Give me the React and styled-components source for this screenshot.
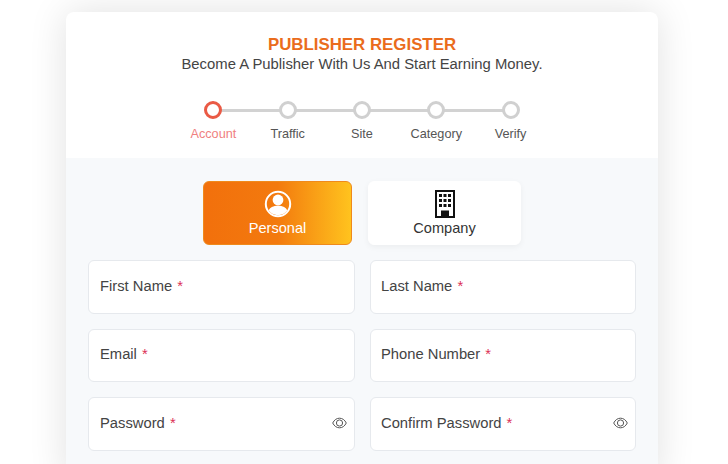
import React from 'react';
import styled, { createGlobalStyle } from 'styled-components';

const GlobalStyle = createGlobalStyle`
  html, body {
    margin: 0;
    height: 100%;
    overflow: hidden;
    background: #ffffff;
    font-family: "Liberation Sans", Arial, sans-serif;
  }
  * { box-sizing: border-box; }
`;

const Page = styled.div`
  width: 728px;
  height: 464px;
  overflow: hidden;
  padding-top: 12px;
  background: #ffffff;
`;

const Card = styled.div`
  width: 592px;
  margin-left: 66px;
  background: #ffffff;
  border-radius: 8px 8px 0 0;
  box-shadow: 0 0 38px rgba(0, 0, 0, 0.12);
`;

const Header = styled.div`
  height: 146px;
  padding-top: 23px;
  text-align: center;
`;

const Title = styled.h1`
  margin: 0;
  font-size: 16.85px;
  line-height: 20px;
  font-weight: 700;
  color: #ea6c1c;
`;

const Subtitle = styled.p`
  margin: 0;
  font-size: 14.85px;
  line-height: 18px;
  color: #444444;
`;

const Stepper = styled.div`
  display: grid;
  grid-template-columns: repeat(5, 74.3px);
  justify-content: center;
  margin-top: 28px;
`;

const Step = styled.div`
  position: relative;
  display: flex;
  flex-direction: column;
  align-items: center;
  gap: 8px;

  &:not(:last-child)::after {
    content: '';
    position: absolute;
    top: 8px;
    left: 50%;
    width: 100%;
    height: 3px;
    background: #d2d2d2;
  }
`;

const Dot = styled.span`
  position: relative;
  z-index: 1;
  width: 18px;
  height: 18px;
  border-radius: 50%;
  background: #ffffff;
  border: 3px solid ${p => (p.$active ? '#ea5a45' : '#d0d0d0')};
`;

const StepLabel = styled.span`
  font-size: 12.7px;
  line-height: 14px;
  color: ${p => (p.$active ? '#f08080' : '#555555')};
`;

const Form = styled.div`
  background: #f7f9fb;
  padding: 23px 22px 30px;
`;

const TypeRow = styled.div`
  display: flex;
  justify-content: center;
  gap: 16px;
  margin-bottom: 15px;
`;

const TypeButton = styled.button`
  width: ${p => (p.$active ? '149px' : '153px')};
  height: 64px;
  display: flex;
  flex-direction: column;
  align-items: center;
  padding: 8px 0 0;
  gap: 2px;
  border-radius: 6px;
  font-family: inherit;
  font-size: 14.6px;
  line-height: 17px;
  border: 1px solid ${p => (p.$active ? '#ef8a1c' : '#ffffff')};
  color: ${p => (p.$active ? '#ffffff' : '#333333')};
  background: ${p => (p.$active
    ? 'linear-gradient(90deg, #f2700c 0%, #f37a0e 50%, #ffc31e 100%)'
    : '#ffffff')};
  box-shadow: ${p => (p.$active ? 'none' : '0 2px 6px rgba(0, 0, 0, 0.05)')};
`;

const Fields = styled.div`
  display: grid;
  grid-template-columns: 267px 266px;
  column-gap: 15px;
  row-gap: 15px;
`;

const Field = styled.div`
  height: 53.5px;
  display: flex;
  align-items: center;
  justify-content: space-between;
  padding: 0 7px 2px 11px;
  background: #ffffff;
  border: 1px solid #e6e9ed;
  border-radius: 6px;

  &:nth-child(even) {
    padding-left: 10px;
  }
`;

const FieldLabel = styled.span`
  font-size: 14.75px;
  color: #444444;
`;

const Required = styled.span`
  margin-left: 1px;
  color: #dc3055;
`;

const PersonIcon = () => (
  <svg width="28" height="28" viewBox="0 0 28 28">
    <circle cx="14" cy="14" r="12.2" fill="none" stroke="#fff" strokeWidth="2" />
    <circle cx="14" cy="10" r="5.4" fill="#fff" />
    <path d="M4.800 20.600c.8-3 4.600-4.800 9.200-4.800s8.400 1.800 9.200 4.800c-2.200 3-5.500 4.600-9.200 4.600s-7-1.600-9.200-4.600z" fill="#fff" />
  </svg>
);

const BuildingIcon = () => (
  <svg width="20" height="28" viewBox="0 0 20 28">
    <path d="M1 1h18v26H1z" fill="none" stroke="#111" strokeWidth="2" />
    <g fill="#111">
      <rect x="4" y="4" width="3" height="3" />
      <rect x="8.500" y="4" width="3" height="3" />
      <rect x="13" y="4" width="3" height="3" />
      <rect x="4" y="9" width="3" height="3" />
      <rect x="8.500" y="9" width="3" height="3" />
      <rect x="13" y="9" width="3" height="3" />
      <rect x="4" y="14" width="3" height="3" />
      <rect x="8.500" y="14" width="3" height="3" />
      <rect x="13" y="14" width="3" height="3" />
      <rect x="6" y="20.500" width="8" height="6.500" />
    </g>
  </svg>
);

const EyeIcon = () => (
  <svg width="15" height="12" viewBox="0 0 15 12" fill="none" stroke="#555" strokeWidth="1">
    <path d="M.7 6C2.300 2.800 4.700 1.200 7.500 1.200S12.700 2.800 14.300 6c-1.600 3.200-4 4.800-6.800 4.800S2.300 9.200.7 6z" />
    <circle cx="7.500" cy="6" r="3.100" />
  </svg>
);

const steps = ['Account', 'Traffic', 'Site', 'Category', 'Verify'];

const fields = [
  { label: 'First Name' },
  { label: 'Last Name' },
  { label: 'Email' },
  { label: 'Phone Number' },
  { label: 'Password', secret: true },
  { label: 'Confirm Password', secret: true },
];

export default function App() {
  return (
    <>
      <GlobalStyle />
      <Page>
        <Card>
          <Header>
            <Title>PUBLISHER REGISTER</Title>
            <Subtitle>Become A Publisher With Us And Start Earning Money.</Subtitle>
            <Stepper>
              {steps.map((s, i) => (
                <Step key={s}>
                  <Dot $active={i === 0} />
                  <StepLabel $active={i === 0}>{s}</StepLabel>
                </Step>
              ))}
            </Stepper>
          </Header>
          <Form>
            <TypeRow>
              <TypeButton $active>
                <PersonIcon />
                Personal
              </TypeButton>
              <TypeButton>
                <BuildingIcon />
                Company
              </TypeButton>
            </TypeRow>
            <Fields>
              {fields.map(f => (
                <Field key={f.label}>
                  <FieldLabel>
                    {f.label} <Required>*</Required>
                  </FieldLabel>
                  {f.secret && <EyeIcon />}
                </Field>
              ))}
            </Fields>
          </Form>
        </Card>
      </Page>
    </>
  );
}
